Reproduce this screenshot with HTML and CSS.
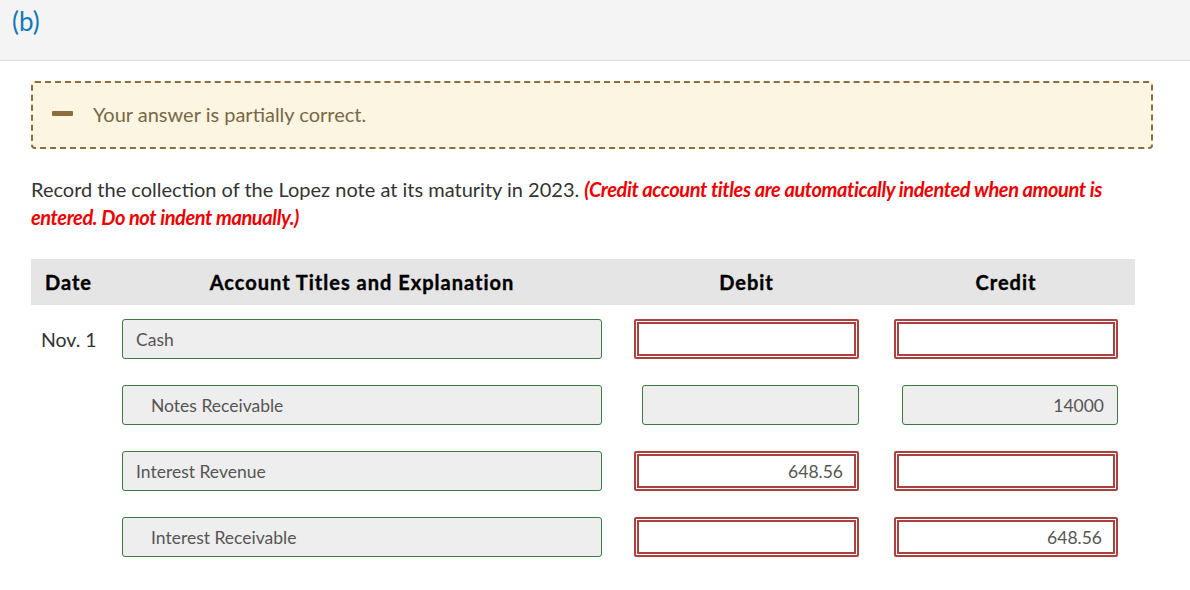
FILE: index.html
```html
<!DOCTYPE html>
<html>
<head>
<meta charset="utf-8">
<link rel="stylesheet" href="styles.css">
</head>
<body>
<div class="part-header">(b)</div>
<div class="content">
  <div class="feedback">
    <span class="feedback-icon"></span>
    <span class="feedback-text">Your answer is partially correct.</span>
  </div>
  <p class="instruction">Record the collection of the Lopez note at its maturity in 2023. <em class="hint">(Credit account titles are automatically indented when amount is entered. Do not indent manually.)</em></p>
  <div class="journal">
    <div class="jhead">
      <div class="h-date">Date</div>
      <div class="h-acct">Account Titles and Explanation</div>
      <div class="h-debit">Debit</div>
      <div class="h-credit">Credit</div>
    </div>
    <div class="jrow">
      <div class="c-date">Nov. 1</div>
      <div class="c-acct"><div class="field ok">Cash</div></div>
      <div class="c-amt debit"><div class="field bad"></div></div>
      <div class="c-amt credit"><div class="field bad"></div></div>
    </div>
    <div class="jrow">
      <div class="c-date"></div>
      <div class="c-acct"><div class="field ok indent">Notes Receivable</div></div>
      <div class="c-amt debit"><div class="field ok num"></div></div>
      <div class="c-amt credit"><div class="field ok num">14000</div></div>
    </div>
    <div class="jrow">
      <div class="c-date"></div>
      <div class="c-acct"><div class="field ok">Interest Revenue</div></div>
      <div class="c-amt debit"><div class="field bad num">648.56</div></div>
      <div class="c-amt credit"><div class="field bad num"></div></div>
    </div>
    <div class="jrow">
      <div class="c-date"></div>
      <div class="c-acct"><div class="field ok indent">Interest Receivable</div></div>
      <div class="c-amt debit"><div class="field bad num"></div></div>
      <div class="c-amt credit"><div class="field bad num">648.56</div></div>
    </div>
  </div>
</div>
</body>
</html>
```
FILE: styles.css
```css
* { box-sizing: border-box; }
body {
  margin: 0;
  background: #fff;
  font-family: Lato, "Open Sans", sans-serif;
  color: #333;
}
.part-header {
  height: 61px;
  background: #f4f4f4;
  border-bottom: 1px solid #dcdcdc;
  color: #1579b7;
  font-size: 26px;
  line-height: 26px;
  padding: 8px 0 0 12px;
}
.content {
  padding: 20px 0 0 31px;
}
.feedback {
  width: 1122px;
  height: 68px;
  border: 2px dashed #8c6d3b;
  border-radius: 4px;
  background: #fcf5e2;
  display: flex;
  align-items: center;
  padding-left: 19px;
}
.feedback-icon {
  width: 21px;
  height: 5px;
  background: #8c6d3b;
  border-radius: 1px;
  margin-right: 20px;
  margin-top: -4px;
}
.feedback-text {
  font-size: 20px;
  color: #786847;
  margin-top: -3px;
}
.instruction {
  margin: 26px 0 0 0;
  width: 1100px;
  font-size: 20px;
  line-height: 28px;
  color: #333;
}
.hint {
  color: #ee0000;
  font-weight: bold;
  font-style: italic;
  letter-spacing: -0.4px;
}
.journal {
  margin-top: 28px;
  width: 1104px;
}
.jhead, .jrow {
  display: grid;
  grid-template-columns: 91px 480px 257px 259px;
}
.jhead {
  height: 46px;
  background: #e5e5e5;
  align-items: center;
  font-weight: bold;
  font-size: 20px;
  letter-spacing: 1px;
  -webkit-text-stroke: 0.4px #000;
  color: #000;
}
.h-date { padding-left: 14px; }
.h-acct { text-align: center; }
.h-debit { text-align: center; padding-left: 32px; }
.h-credit { text-align: center; padding-left: 35px; }
.jrow {
  margin-top: 14px;
  height: 40px;
  align-items: center;
}
.jrow + .jrow { margin-top: 26px; }
.c-date {
  padding-left: 10px;
  font-size: 19.5px;
  color: #333;
}
.c-amt.debit { padding-left: 32px; }
.c-amt.credit { padding-left: 35px; }
.field {
  height: 40px;
  font-size: 17.5px;
  color: #555;
  display: flex;
  align-items: center;
  padding: 0 13px;
}
.field.ok {
  background: #eeeeee;
  border: 1px solid #3e7a3f;
  border-radius: 3px;
}
.c-amt .field.ok { margin-left: 8px; }
.field.indent { padding-left: 28px; }
.field.bad {
  background: #fff;
  border: 5px double #ab4240;
  border-radius: 2px;
}
.field.num { justify-content: flex-end; }
.field.bad.num { padding-right: 11px; }
```
